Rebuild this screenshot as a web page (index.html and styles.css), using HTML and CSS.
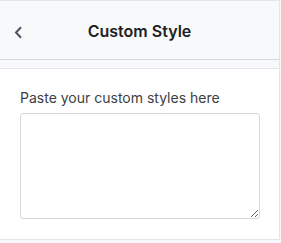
FILE: index.html
```html
<!DOCTYPE html>
<html lang="en">

<head>
    <meta charset="UTF-8" />
    <meta name="viewport" content="width=device-width, initial-scale=1" />
    <title>Custom Style</title>
    <link rel="stylesheet" href="styles.css">
</head>

<body>
    <div class="panel">
        <header class="header">
            <button class="back-btn" aria-label="Back">
                <svg width="9" height="13" viewBox="0 0 9 13" fill="none">
                    <path d="M7 1.2L2 6.5L7 11.8" stroke="currentColor" stroke-width="2" />
                </svg>
            </button>
            <h1 class="title">Custom Style</h1>
        </header>

        <main class="content">
            <label class="field">
                <span class="field-label">Paste your custom styles here</span>
                <textarea class="field-input"></textarea>
            </label>
        </main>
    </div>
</body>
</html>
```

FILE: styles.css
```css
:root {
    --grey-50: #f8f9fa;
    --grey-200: #e3e5e8;
    --grey-300: #d4d8dc;
    --grey-700: #3c4043;
    --grey-900: #202124;
    --icon: #4b5260;
}

* {
    margin: 0;
    padding: 0;
    box-sizing: border-box;
}

body {
    font-family: 'Inter', sans-serif;
    background-color: var(--grey-50);
    color: var(--grey-900);
}

.panel {
    width: 280px;
    border-top: 1px solid var(--grey-200);
    border-right: 1px solid var(--grey-200);
    background-color: var(--grey-50);
}

.header {
    position: relative;
    height: 59px;
    display: flex;
    align-items: center;
    justify-content: center;
    border-bottom: 1px solid var(--grey-300);
}

.back-btn {
    position: absolute;
    left: 14px;
    top: 25px;
    display: flex;
    background: none;
    border: none;
    color: var(--icon);
    cursor: pointer;
}

.title {
    font-size: 16px;
    font-weight: 600;
    color: var(--grey-900);
    margin-top: 2px;
}

.content {
    margin-top: 8px;
    padding: 20px 20px 20px;
    background-color: white;
    border-top: 1px solid var(--grey-200);
    border-bottom: 1px solid var(--grey-200);
}

.field {
    display: flex;
    flex-direction: column;
    gap: 6px;
}

.field-label {
    font-size: 14px;
    color: var(--grey-700);
    line-height: 18px;
}

.field-input {
    width: 240px;
    height: 106px;
    border: 1px solid var(--grey-300);
    border-radius: 3px;
    font-family: 'Liberation Mono', monospace;
    font-size: 12px;
}
```
